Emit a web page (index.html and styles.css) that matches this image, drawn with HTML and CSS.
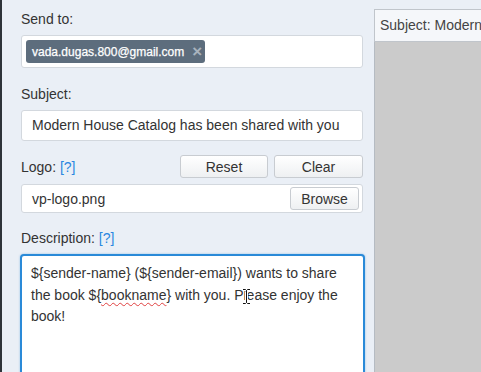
FILE: index.html
```html
<!DOCTYPE html>
<html>
<head>
<meta charset="utf-8">
<link rel="stylesheet" href="styles.css">
</head>
<body>
<div class="app">
  <div class="strip"></div>
  <div class="form">
    <div class="label">Send to:</div>
    <div class="field tags">
      <span class="chip">vada.dugas.800@gmail.com<span class="x">×</span></span>
    </div>

    <div class="label gap">Subject:</div>
    <div class="field subject">Modern House Catalog has been shared with you</div>

    <div class="logo-row">
      <div class="label">Logo: <span class="help">[?]</span></div>
      <div class="btns">
        <button class="btn reset">Reset</button>
        <button class="btn clear">Clear</button>
      </div>
    </div>
    <div class="field file">
      <span>vp-logo.png</span>
      <button class="btn browse">Browse</button>
    </div>

    <div class="label gap2">Description: <span class="help">[?]</span></div>
    <div class="area">${sender-name} (${sender-email}) wants to share the book ${<span class="typo">bookname</span>} with you. Please enjoy the book!<svg class="cursor" width="9" height="17" viewBox="0 0 9 17"><path d="M1 1.5h2.5l1 1 1-1H8M4.5 2.5v12M1 15.5h2.5l1-1 1 1H8" fill="none" stroke="#fff" stroke-width="3"/><path d="M1 1.5h2.5l1 1 1-1H8M4.5 2.5v12M1 15.5h2.5l1-1 1 1H8" fill="none" stroke="#111" stroke-width="1"/></svg></div>
  </div>
  <div class="preview">
    <div class="preview-head">Subject: Modern House Catalog has been shared with you</div>
    <div class="preview-body"></div>
  </div>
</div>
</body>
</html>
```

FILE: styles.css
```css
* { box-sizing: border-box; }
html, body {
  margin: 0;
  width: 481px;
  height: 372px;
  overflow: hidden;
  font-family: "Liberation Sans", Arial, sans-serif;
  font-size: 14px;
  color: #333;
}
.app {
  display: flex;
  height: 372px;
  background: #eaeff6;
}
.strip {
  width: 2px;
  flex: none;
  background: #2e3339;
}
.form {
  width: 372px;
  flex: none;
  padding: 9px 11px 0 19px;
  display: flex;
  flex-direction: column;
  overflow: hidden;
}
.form > * { flex: none; }
.label {
  height: 20px;
  line-height: 20px;
  margin-bottom: 6px;
  color: #333;
}
.label.gap { margin-top: 16px; }
.label.gap2 { margin-top: 15px; }
.help { color: #2b87e0; }
.field {
  background: #fff;
  border: 1px solid #d3d8de;
  border-radius: 3px;
}
.tags {
  height: 33px;
  padding: 4px;
  display: flex;
  align-items: center;
}
.chip {
  display: inline-flex;
  align-items: center;
  height: 23px;
  width: 179px;
  padding-left: 6px;
  background: #5d6d7d;
  border-radius: 3px;
  color: #fff;
  font-size: 12px;
  -webkit-text-stroke: 0.25px #fff;
}
.chip .x {
  margin-left: 8px;
  color: #a9b3bd;
  font-size: 17px;
  font-weight: bold;
  -webkit-text-stroke: 0;
}
.subject {
  height: 31px;
  line-height: 29px;
  padding-left: 10px;
}
.logo-row {
  margin-top: 14px;
  height: 23px;
  display: flex;
  justify-content: space-between;
  align-items: center;
}
.logo-row .label { margin: 0; }
.btns {
  display: flex;
  gap: 6px;
}
.btn {
  font-family: "Liberation Sans", Arial, sans-serif;
  font-size: 14px;
  color: #333;
  background: linear-gradient(#ffffff, #eef0f2);
  border: 1px solid #c8ccd1;
  border-radius: 3px;
  padding: 0;
  height: 23px;
}
.reset { width: 88px; }
.clear { width: 89px; }
.file {
  margin-top: 6px;
  height: 29px;
  padding: 0 3px 0 10px;
  display: flex;
  align-items: center;
  justify-content: space-between;
}
.browse {
  width: 69px;
  height: 23px;
}
.area {
  position: relative;
  margin-left: -1px;
  width: 345px;
  height: 140px;
  background: #fff;
  border: 2px solid #2a8ad8;
  border-radius: 4px;
  box-shadow: 0 0 2px rgba(42, 138, 216, 0.5);
  padding: 7px 12px 0 9px;
  line-height: 21.5px;
  color: #333;
}
.typo {
  text-decoration: underline wavy #e04040;
  text-decoration-thickness: 1px;
  text-underline-offset: 2px;
}
.cursor {
  position: absolute;
  left: 220px;
  top: 32px;
}
.preview {
  flex: 1;
  display: flex;
  flex-direction: column;
  padding-top: 9px;
  min-width: 0;
}
.preview-head {
  flex: none;
  height: 33px;
  line-height: 31px;
  padding-left: 5px;
  background: #f5f7fa;
  border: 1px solid #c0c5cb;
  border-right: none;
  white-space: nowrap;
  overflow: hidden;
  color: #444;
}
.preview-body {
  flex: 1;
  background: #cbcbcb;
  border-left: 1px solid #b5bbc2;
}
```
